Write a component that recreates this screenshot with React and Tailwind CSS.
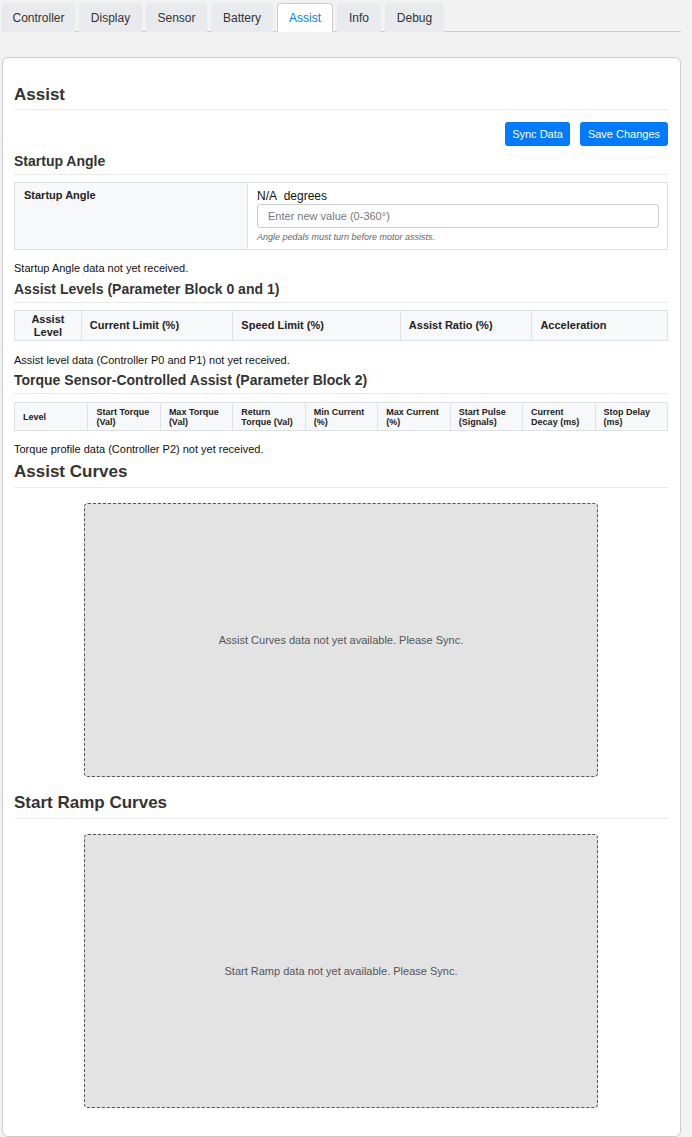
import React from "react";

const TABS = [
  { label: "Controller", w: "w-[73px]" },
  { label: "Display", w: "w-[63px]" },
  { label: "Sensor", w: "w-[61px]" },
  { label: "Battery", w: "w-[62px]" },
  { label: "Assist", w: "w-[56px]", active: true },
  { label: "Info", w: "w-[44px]" },
  { label: "Debug", w: "w-[59px]" },
];

const LEVEL_COLS = [
  { label: "Assist Level", w: "w-[66px]", center: true },
  { label: "Current Limit (%)", w: "w-[152px]" },
  { label: "Speed Limit (%)", w: "w-[168px]" },
  { label: "Assist Ratio (%)", w: "w-[132px]" },
  { label: "Acceleration", w: "w-[136px]" },
];

const TORQUE_COLS = [
  ["Level"],
  ["Start Torque", "(Val)"],
  ["Max Torque", "(Val)"],
  ["Return", "Torque (Val)"],
  ["Min Current", "(%)"],
  ["Max Current", "(%)"],
  ["Start Pulse", "(Signals)"],
  ["Current", "Decay (ms)"],
  ["Stop Delay", "(ms)"],
];

function SectionTitle({ children, className = "" }) {
  return (
    <h2 className={`text-[17px] leading-[20px] font-bold text-[#333] border-b border-[#eaeaea] ${className}`}>
      {children}
    </h2>
  );
}

function SubTitle({ children, className = "" }) {
  return (
    <h3 className={`text-[14px] leading-[17px] font-bold text-[#333] pb-[4px] border-b border-[#eaeaea] ${className}`}>
      {children}
    </h3>
  );
}

function Note({ children, className = "" }) {
  return <p className={`text-[11px] leading-[14px] text-[#111] ${className}`}>{children}</p>;
}

function ChartPlaceholder({ text }) {
  return (
    <div className="mx-auto mt-[15px] w-[514px] h-[274px] bg-[#e3e3e3] border border-dashed border-[#555] rounded-[4px] flex items-center justify-center">
      <span className="text-[11px] text-[#555]">{text}</span>
    </div>
  );
}

export default function App() {
  return (
    <div className="min-h-screen bg-[#f2f2f2] text-[#222]" style={{ fontFamily: '"Liberation Sans", Arial, sans-serif' }}>
      <div className="w-[681px] pl-[2px]">
        {/* tab strip */}
        <div className="flex gap-[4px] pt-[3px] border-b border-[#ccc]">
          {TABS.map((t) => (
            <div
              key={t.label}
              className={`${t.w} h-[29px] -mb-px flex items-center justify-center text-[12px] rounded-t-[4px] ${
                t.active
                  ? "bg-white border border-[#ccc] border-b-white text-[#007bff]"
                  : "bg-[#e8eaed] text-[#333]"
              }`}
            >
              {t.label}
            </div>
          ))}
        </div>

        {/* main card */}
        <div className="mt-[25px] bg-white border border-[#ccc] rounded-[6px] pl-[11px] pr-[12px] pt-[27px] pb-[28px]">
          <SectionTitle className="pb-[4px]">Assist</SectionTitle>

          <div className="flex justify-end gap-[10px] mt-[12px]">
            <button className="w-[65px] h-[24px] bg-[#007bff] text-white text-[11px] rounded-[3px]">Sync Data</button>
            <button className="w-[88px] h-[24px] bg-[#007bff] text-white text-[11px] rounded-[3px]">Save Changes</button>
          </div>

          <SubTitle className="mt-[7px]">Startup Angle</SubTitle>
          <div className="mt-[7px] flex border border-[#dee2e6]">
            <div className="w-[233px] bg-[#f7f8fa] border-r border-[#dee2e6] px-[9px] pt-[6px] text-[11px] leading-[13px] font-bold text-[#222]">
              Startup Angle
            </div>
            <div className="flex-1 pl-[9px] pr-[8px] pt-[6px] pb-[6px]">
              <div className="text-[12px] leading-[14px] text-[#111]">N/A&nbsp;&nbsp;degrees</div>
              <input
                className="mt-[1px] w-full h-[24px] border border-[#ccc] rounded-[3px] px-[10px] text-[11px] placeholder:text-[#777] outline-none"
                placeholder="Enter new value (0-360°)"
              />
              <div className="mt-[4px] text-[9px] leading-[11px] italic text-[#666]">Angle pedals must turn before motor assists.</div>
            </div>
          </div>

          <Note className="mt-[11px]">Startup Angle data not yet received.</Note>

          <SubTitle className="mt-[6px]">Assist Levels (Parameter Block 0 and 1)</SubTitle>
          <div className="mt-[7px] flex border border-[#dee2e6] bg-[#f7f8fa] h-[31px]">
            {LEVEL_COLS.map((c, i) => (
              <div
                key={c.label}
                className={`${c.w} flex items-center px-[8px] text-[11px] leading-[13px] font-bold text-[#222] ${
                  i > 0 ? "border-l border-[#dee2e6]" : ""
                } ${c.center ? "justify-center text-center" : ""}`}
              >
                {c.center ? (
                  <span>
                    Assist
                    <br />
                    Level
                  </span>
                ) : (
                  c.label
                )}
              </div>
            ))}
          </div>

          <Note className="mt-[12px]">Assist level data (Controller P0 and P1) not yet received.</Note>

          <SubTitle className="mt-[5px]">Torque Sensor-Controlled Assist (Parameter Block 2)</SubTitle>
          <div className="mt-[8px] grid grid-cols-9 border border-[#dee2e6] bg-[#f7f8fa] h-[29px]">
            {TORQUE_COLS.map((lines, i) => (
              <div
                key={lines.join(" ")}
                className={`flex items-center pl-[8px] pr-[4px] text-[9px] leading-[10px] font-bold text-[#222] ${
                  i > 0 ? "border-l border-[#dee2e6]" : ""
                }`}
              >
                <span>
                  {lines[0]}
                  {lines[1] && <br />}
                  {lines[1]}
                </span>
              </div>
            ))}
          </div>

          <Note className="mt-[11px]">Torque profile data (Controller P2) not yet received.</Note>

          <SectionTitle className="mt-[6px] pb-[5px]">Assist Curves</SectionTitle>
          <ChartPlaceholder text="Assist Curves data not yet available. Please Sync." />

          <SectionTitle className="mt-[16px] pb-[5px]">Start Ramp Curves</SectionTitle>
          <ChartPlaceholder text="Start Ramp data not yet available. Please Sync." />
        </div>
      </div>
    </div>
  );
}
